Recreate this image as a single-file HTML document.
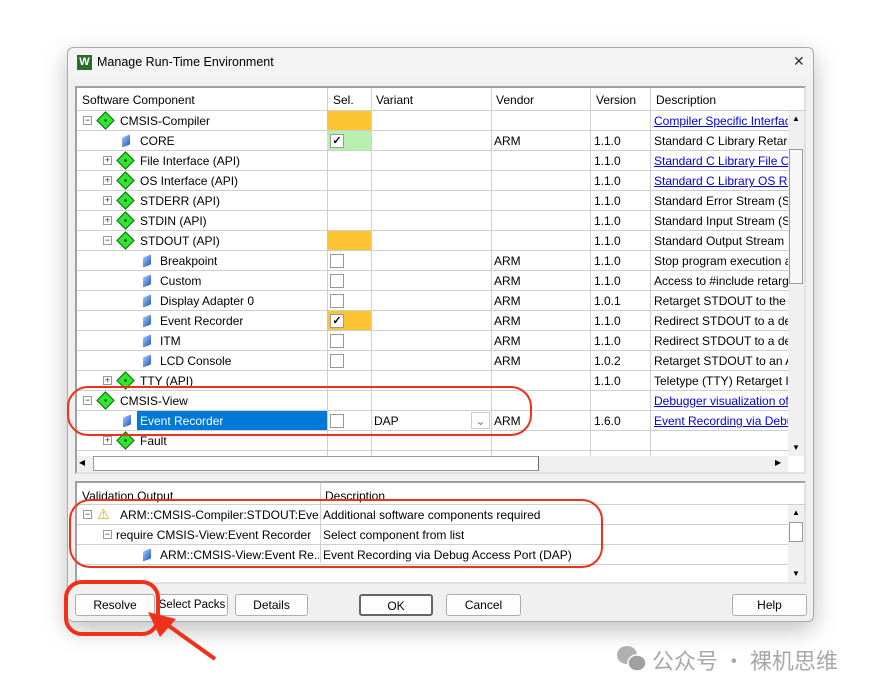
<!DOCTYPE html><html><head><meta charset="utf-8"><style>
*{box-sizing:border-box}body{margin:0;width:878px;height:694px;background:#fff;font-family:"Segoe UI","Liberation Sans",sans-serif;font-size:12px;color:#000;position:relative;overflow:hidden}
.dlg{position:absolute;left:67px;top:47px;width:747px;height:575px;background:#f0f0f0;border:1px solid #aaa;border-radius:6px;box-shadow:0 8px 24px rgba(0,0,0,.25)}
.title{position:absolute;left:0;top:0;width:100%;height:30px;background:#f3f3f3;border-radius:6px 6px 0 0}
.a{position:absolute;white-space:nowrap;overflow:hidden}
.tbl{position:absolute;left:75px;top:86px;width:731px;height:388px;background:#fff;border:2px solid #a0a0a0;border-right-color:#e0e0e0;border-bottom-color:#e0e0e0}
.row{position:absolute;left:0;width:711px;height:20px;border-bottom:1px solid #cfcfcf}
.row .a{top:2px;line-height:16px}
.vl{position:absolute;top:0;width:1px;background:#cfcfcf}
.lnk{color:#0000ee;text-decoration:underline}
.cb{position:absolute;left:253px;top:3px;width:14px;height:14px;border:1px solid #999;background:#fff;font-size:11px;line-height:12px;text-align:center;font-weight:bold}
.y{position:absolute;left:250px;top:0;width:44px;height:19px;background:#fdc534}
.g{position:absolute;left:250px;top:0;width:44px;height:19px;background:#b8f0b0}
.dia{position:absolute;width:13px;height:13px;background:#2ee82e;transform:rotate(45deg);border:1px solid #0a6a0a}
.dia:after{content:"";position:absolute;left:3px;top:3px;width:5px;height:5px;background:radial-gradient(#000 30%,transparent 35%)}
.gem{position:absolute;width:8px;height:10px;background:linear-gradient(135deg,#9cc4f4,#2a5ec0);transform:skewY(-20deg);border-radius:1px}
.ex{position:absolute;width:9px;height:9px;border:1px solid #999;background:#fff;font-size:9px;line-height:7px;text-align:center;color:#333}
.btn{position:absolute;top:594px;height:22px;border:1px solid #adadad;background:#fdfdfd;border-radius:3px;text-align:center;line-height:20px;font-size:12px;font-family:"Liberation Sans",sans-serif}
.sb{position:absolute;background:#f0f0f0}
</style></head><body>
<div class="dlg"><div class="title"></div>
<div class="a" style="left:9px;top:7px;width:15px;height:15px;background:#2d6b2d;color:#fff;font-size:11px;font-weight:bold;line-height:15px;text-align:center">W</div>
<div class="a" style="left:29px;top:7px;font-size:12.5px">Manage Run-Time Environment</div>
<div class="a" style="left:725px;top:5px;font-size:14px;color:#333">✕</div>
</div>
<div class="tbl">
<div class="vl" style="left:250px;height:370px"></div><div class="vl" style="left:294px;height:370px"></div><div class="vl" style="left:414px;height:370px"></div><div class="vl" style="left:513px;height:370px"></div><div class="vl" style="left:573px;height:370px"></div>
<div class="row" style="top:0;height:23px;width:729px"><div class="a" style="left:5px;top:4px">Software Component</div><div class="a" style="left:256px;top:4px">Sel.</div><div class="a" style="left:299px;top:4px">Variant</div><div class="a" style="left:419px;top:4px">Vendor</div><div class="a" style="left:519px;top:4px">Version</div><div class="a" style="left:579px;top:4px">Description</div></div>
<div class="row" style="top:23px"><div class="y"></div><div class="ex" style="left:6px;top:5px">−</div><div class="dia" style="left:22px;top:3px"></div><div class="a" style="left:43px">CMSIS-Compiler</div><div class="a lnk" style="left:577px;width:134px">Compiler Specific Interface</div></div>
<div class="row" style="top:43px"><div class="g"></div><div class="cb">✓</div><div class="gem" style="left:45px;top:5px"></div><div class="a" style="left:63px">CORE</div><div class="a" style="left:417px">ARM</div><div class="a" style="left:517px">1.1.0</div><div class="a" style="left:577px;width:134px">Standard C Library Retarget</div></div>
<div class="row" style="top:63px"><div class="ex" style="left:26px;top:5px">+</div><div class="dia" style="left:42px;top:3px"></div><div class="a" style="left:63px">File Interface (API)</div><div class="a" style="left:517px">1.1.0</div><div class="a lnk" style="left:577px;width:134px">Standard C Library File Op</div></div>
<div class="row" style="top:83px"><div class="ex" style="left:26px;top:5px">+</div><div class="dia" style="left:42px;top:3px"></div><div class="a" style="left:63px">OS Interface (API)</div><div class="a" style="left:517px">1.1.0</div><div class="a lnk" style="left:577px;width:134px">Standard C Library OS Ret</div></div>
<div class="row" style="top:103px"><div class="ex" style="left:26px;top:5px">+</div><div class="dia" style="left:42px;top:3px"></div><div class="a" style="left:63px">STDERR (API)</div><div class="a" style="left:517px">1.1.0</div><div class="a" style="left:577px;width:134px">Standard Error Stream (ST</div></div>
<div class="row" style="top:123px"><div class="ex" style="left:26px;top:5px">+</div><div class="dia" style="left:42px;top:3px"></div><div class="a" style="left:63px">STDIN (API)</div><div class="a" style="left:517px">1.1.0</div><div class="a" style="left:577px;width:134px">Standard Input Stream (ST</div></div>
<div class="row" style="top:143px"><div class="y"></div><div class="ex" style="left:26px;top:5px">−</div><div class="dia" style="left:42px;top:3px"></div><div class="a" style="left:63px">STDOUT (API)</div><div class="a" style="left:517px">1.1.0</div><div class="a" style="left:577px;width:134px">Standard Output Stream (</div></div>
<div class="row" style="top:163px"><div class="cb"></div><div class="gem" style="left:66px;top:5px"></div><div class="a" style="left:83px">Breakpoint</div><div class="a" style="left:417px">ARM</div><div class="a" style="left:517px">1.1.0</div><div class="a" style="left:577px;width:134px">Stop program execution at</div></div>
<div class="row" style="top:183px"><div class="cb"></div><div class="gem" style="left:66px;top:5px"></div><div class="a" style="left:83px">Custom</div><div class="a" style="left:417px">ARM</div><div class="a" style="left:517px">1.1.0</div><div class="a" style="left:577px;width:134px">Access to #include retarget</div></div>
<div class="row" style="top:203px"><div class="cb"></div><div class="gem" style="left:66px;top:5px"></div><div class="a" style="left:83px">Display Adapter 0</div><div class="a" style="left:417px">ARM</div><div class="a" style="left:517px">1.0.1</div><div class="a" style="left:577px;width:134px">Retarget STDOUT to the A</div></div>
<div class="row" style="top:223px"><div class="y"></div><div class="cb">✓</div><div class="gem" style="left:66px;top:5px"></div><div class="a" style="left:83px">Event Recorder</div><div class="a" style="left:417px">ARM</div><div class="a" style="left:517px">1.1.0</div><div class="a" style="left:577px;width:134px">Redirect STDOUT to a deb</div></div>
<div class="row" style="top:243px"><div class="cb"></div><div class="gem" style="left:66px;top:5px"></div><div class="a" style="left:83px">ITM</div><div class="a" style="left:417px">ARM</div><div class="a" style="left:517px">1.1.0</div><div class="a" style="left:577px;width:134px">Redirect STDOUT to a deb</div></div>
<div class="row" style="top:263px"><div class="cb"></div><div class="gem" style="left:66px;top:5px"></div><div class="a" style="left:83px">LCD Console</div><div class="a" style="left:417px">ARM</div><div class="a" style="left:517px">1.0.2</div><div class="a" style="left:577px;width:134px">Retarget STDOUT to an Ar</div></div>
<div class="row" style="top:283px"><div class="ex" style="left:26px;top:5px">+</div><div class="dia" style="left:42px;top:3px"></div><div class="a" style="left:63px">TTY (API)</div><div class="a" style="left:517px">1.1.0</div><div class="a" style="left:577px;width:134px">Teletype (TTY) Retarget In</div></div>
<div class="row" style="top:303px"><div class="ex" style="left:6px;top:5px">−</div><div class="dia" style="left:22px;top:3px"></div><div class="a" style="left:43px">CMSIS-View</div><div class="a lnk" style="left:577px;width:134px">Debugger visualization of</div></div>
<div class="row" style="top:323px"><div class="a" style="left:60px;top:0;width:190px;height:19px;background:#0078d7"></div><div class="cb"></div><div class="gem" style="left:46px;top:5px"></div><div class="a" style="left:63px;color:#fff">Event Recorder</div><div class="a" style="left:297px">DAP</div><div class="a" style="left:394px;top:1px;width:19px;height:17px;border:1px solid #ccc;background:#fff;text-align:center;color:#777">⌄</div><div class="a" style="left:417px">ARM</div><div class="a" style="left:517px">1.6.0</div><div class="a lnk" style="left:577px;width:134px">Event Recording via Debug</div></div>
<div class="row" style="top:343px"><div class="ex" style="left:26px;top:5px">+</div><div class="dia" style="left:42px;top:3px"></div><div class="a" style="left:63px">Fault</div></div>
<div class="sb" style="left:711px;top:23px;width:16px;height:345px;background:#f0f0f0"><div class="a" style="left:0;top:0;width:16px;height:16px;font-size:8px;text-align:center;line-height:16px">▲</div><div class="a" style="left:1px;top:38px;width:14px;height:135px;background:#f7f7f7;border:1px solid #999"></div><div class="a" style="left:0;top:329px;width:16px;height:16px;font-size:8px;text-align:center;line-height:16px">▼</div></div>
<div class="sb" style="left:0;top:368px;width:711px;height:16px"><div class="a" style="left:2px;top:2px;font-size:8px">◀</div><div class="a" style="left:16px;top:0;width:446px;height:15px;background:#fff;border:1px solid #999;border-right-color:#666"></div><div class="a" style="left:698px;top:2px;font-size:8px">▶</div></div>
</div>
<div class="tbl" style="top:481px;height:103px">
<div class="vl" style="left:243px;height:80px"></div>
<div class="row" style="top:0;height:22px;width:729px"><div class="a" style="left:5px;top:5px">Validation Output</div><div class="a" style="left:248px;top:5px">Description</div></div>
<div class="row" style="top:22px"><div class="ex" style="left:6px;top:5px">−</div><div class="a" style="left:20px;top:2px;color:#e8a400;font-size:14px;line-height:14px">⚠</div><div class="a" style="left:43px;width:199px">ARM::CMSIS-Compiler:STDOUT:Eve...</div><div class="a" style="left:246px">Additional software components required</div></div>
<div class="row" style="top:42px"><div class="ex" style="left:26px;top:5px">−</div><div class="a" style="left:39px">require CMSIS-View:Event Recorder</div><div class="a" style="left:246px">Select component from list</div></div>
<div class="row" style="top:62px"><div class="gem" style="left:66px;top:5px"></div><div class="a" style="left:83px;width:159px">ARM::CMSIS-View:Event Re...</div><div class="a" style="left:246px">Event Recording via Debug Access Port (DAP)</div></div>
<div class="sb" style="left:711px;top:22px;width:16px;height:77px"><div class="a" style="left:0;top:0;width:16px;font-size:8px;text-align:center;line-height:16px">▲</div><div class="a" style="left:1px;top:17px;width:14px;height:20px;background:#fff;border:1px solid #999"></div><div class="a" style="left:0;top:61px;width:16px;font-size:8px;text-align:center;line-height:16px">▼</div></div>
</div>
<div class="btn" style="left:75px;width:80px">Resolve</div>
<div class="btn" style="left:156px;width:72px;font-size:11.5px">Select Packs</div>
<div class="btn" style="left:235px;width:73px">Details</div>
<div class="btn" style="left:359px;width:74px;border:2px solid #666">OK</div>
<div class="btn" style="left:446px;width:75px">Cancel</div>
<div class="btn" style="left:732px;width:75px">Help</div>
<svg width="878" height="694" style="position:absolute;left:0;top:0" fill="none" stroke="#f03018" stroke-width="2">
<rect x="68" y="387" width="463" height="48" rx="20"/>
<rect x="70" y="500" width="532" height="67" rx="20"/>
<rect x="66" y="582" width="92" height="52" rx="16" stroke-width="4"/>
<line x1="215" y1="659" x2="162" y2="621" stroke-width="4"/>
<polygon points="148,612 176,619 160,637" fill="#f03018" stroke="none"/>
<ellipse cx="627" cy="655" rx="10" ry="9" fill="#b0b0b0" stroke="none"/>
<ellipse cx="637" cy="663" rx="9" ry="8" fill="#a0a0a0" stroke="#fff" stroke-width="1.5"/>
</svg>
<div class="a" style="left:652px;top:644px;color:#a8a8a8;font-size:22px;font-family:'Noto Sans CJK SC',sans-serif">公众号 · 裸机思维</div>
</body></html>
